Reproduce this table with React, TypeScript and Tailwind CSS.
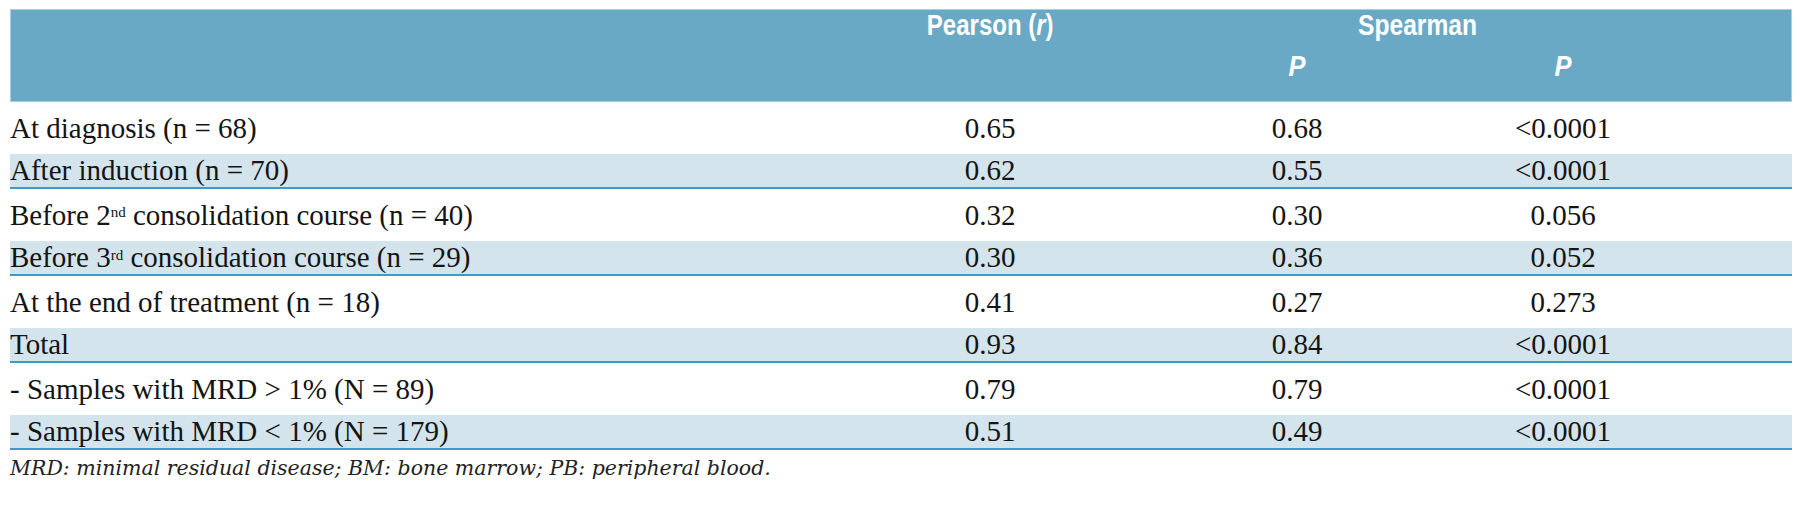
import React from 'react';

type Row = {
  label: React.ReactNode;
  r: string;
  rho: string;
  p: string;
};

const rows: Row[] = [
  { label: 'At diagnosis (n = 68)', r: '0.65', rho: '0.68', p: '<0.0001' },
  { label: 'After induction (n = 70)', r: '0.62', rho: '0.55', p: '<0.0001' },
  {
    label: (
      <>
        Before 2<sup className="text-[15px]">nd</sup> consolidation course (n = 40)
      </>
    ),
    r: '0.32',
    rho: '0.30',
    p: '0.056',
  },
  {
    label: (
      <>
        Before 3<sup className="text-[15px]">rd</sup> consolidation course (n = 29)
      </>
    ),
    r: '0.30',
    rho: '0.36',
    p: '0.052',
  },
  { label: 'At the end of treatment (n = 18)', r: '0.41', rho: '0.27', p: '0.273' },
  { label: 'Total', r: '0.93', rho: '0.84', p: '<0.0001' },
  { label: '- Samples with MRD > 1% (N = 89)', r: '0.79', rho: '0.79', p: '<0.0001' },
  { label: '- Samples with MRD < 1% (N = 179)', r: '0.51', rho: '0.49', p: '<0.0001' },
];

const App = () => {
  return (
    <div className="w-[1800px] h-[522px] bg-white pt-[9px] pl-[10px] pr-[8px]">
      {/* header */}
      <div className="h-[93px] bg-[#69a9c5] border border-[#a6d0e2] text-white font-['Liberation_Sans','Arial',sans-serif] font-bold text-[30px] leading-none">
        <div className="flex h-[30px] items-center">
          <div className="w-[849px]" />
          <div className="w-[260px] flex justify-center">
            <span className="inline-block scale-x-[0.8]">
              Pearson (<i>r</i>)
            </span>
          </div>
          <div className="w-[76px]" />
          <div className="w-[444px] flex justify-center">
            <span className="inline-block scale-x-[0.82]">Spearman</span>
          </div>
        </div>
        <div className="flex h-[52px] items-center">
          <div className="w-[849px]" />
          <div className="w-[260px]" />
          <div className="w-[354px] flex justify-center">
            <i className="inline-block scale-x-[0.85]">P</i>
          </div>
          <div className="w-[178px] flex justify-center">
            <i className="inline-block scale-x-[0.85]">P</i>
          </div>
        </div>
      </div>

      {/* body */}
      <div className="font-['Liberation_Serif',serif] text-[29px] text-[#141414] leading-none">
        {rows.map((row, i) => (
          <div key={i} className="pt-[8.5px]">
            <div
              className={
                i % 2 === 1
                  ? 'flex h-[35px] items-center bg-[#d3e4ec] border-b-2 border-[#3d9cc6]'
                  : 'flex h-[35px] items-center'
              }
            >
              <div className="w-[850px] whitespace-nowrap">{row.label}</div>
              <div className="w-[260px] text-center">{row.r}</div>
              <div className="w-[354px] text-center">{row.rho}</div>
              <div className="w-[178px] text-center">{row.p}</div>
            </div>
          </div>
        ))}
      </div>

      {/* footnote */}
      <div className="h-[36px] flex items-center font-['DejaVu_Serif',serif] italic text-[20.5px] text-[#222]">
        MRD: minimal residual disease; BM: bone marrow; PB: peripheral blood.
      </div>
    </div>
  );
};

export default App;
